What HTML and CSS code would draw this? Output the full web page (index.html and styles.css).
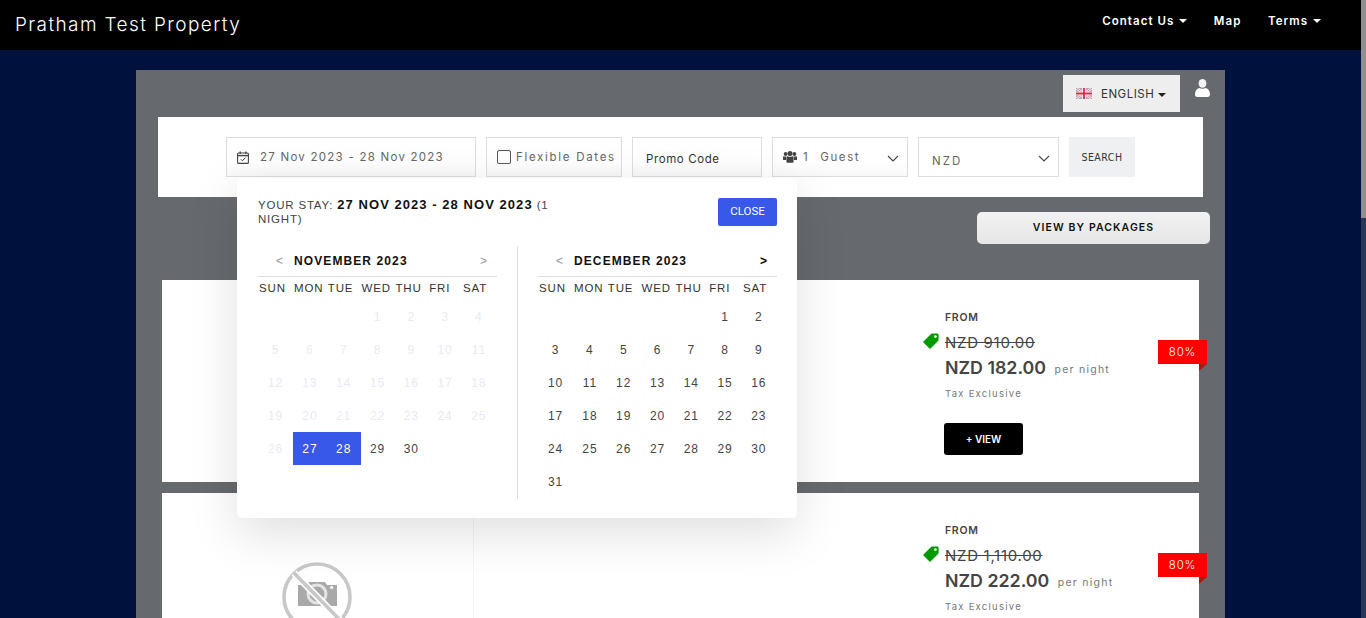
FILE: index.html
```html
<!DOCTYPE html>
<html>
<head>
<title>Pratham Test Property</title>
<link rel="stylesheet" href="styles.css">
</head>
<body>
<div class="page">
  <header class="topbar">
    <div class="brand">Pratham Test Property</div>
    <nav class="topnav">
      <a class="navlink caret-after">Contact Us</a>
      <a class="navlink">Map</a>
      <a class="navlink caret-after">Terms</a>
    </nav>
  </header>

  <main class="container">
    <div class="langrow">
      <div class="langbtn">
        <svg class="flag" viewBox="0 0 16 11" width="16" height="11">
          <rect width="16" height="11" fill="#a9a9c4"/>
          <path d="M0 0L16 11M16 0L0 11" stroke="#fff" stroke-width="2"/>
          <path d="M0 0L16 11M16 0L0 11" stroke="#d8455e" stroke-width=".7"/>
          <path d="M8 0V11M0 5.5H16" stroke="#fff" stroke-width="3.4"/>
          <path d="M8 0V11M0 5.5H16" stroke="#d62a44" stroke-width="1.8"/>
        </svg>
        <span>ENGLISH</span><span class="caret dark"></span>
      </div>
      <svg class="usericon" viewBox="0 0 15 18" width="15" height="18">
        <ellipse cx="7.5" cy="4.4" rx="3.9" ry="4.4" fill="#f2f2f2"/>
        <path d="M0 15.5C0 11.8 1.8 9.6 4.4 9C6 10 9 10 10.6 9C13.2 9.6 15 11.8 15 15.5C15 17 14 18 12.8 18H2.2C1 18 0 17 0 15.5Z" fill="#fff"/>
      </svg>
    </div>

    <section class="searchbar">
      <div class="field field-date">
        <svg class="calicon" viewBox="0 0 12 13" width="12" height="13">
          <rect x=".6" y="2" width="10.8" height="10.4" rx="1" fill="none" stroke="#444" stroke-width="1.1"/>
          <path d="M.6 4.6H11.4" stroke="#444" stroke-width="1.4"/>
          <path d="M3.2 .4V3M8.8 .4V3" stroke="#444" stroke-width="1.3"/>
          <path d="M3.8 8.2L5.4 9.8L8.4 6.6" fill="none" stroke="#444" stroke-width="1"/>
        </svg>
        <span>27 Nov 2023 - 28 Nov 2023</span>
      </div>
      <label class="field field-flex"><span class="check"></span><span>Flexible Dates</span></label>
      <div class="field field-promo">Promo Code</div>
      <div class="field field-guest">
        <svg class="usersicon" viewBox="0 0 14 12" width="14" height="12">
          <circle cx="2.6" cy="3" r="1.9" fill="#444"/>
          <circle cx="11.4" cy="3" r="1.9" fill="#444"/>
          <circle cx="7" cy="2.6" r="2.5" fill="#444"/>
          <path d="M0 5.6H3V9H0ZM11 5.6H14V9H11Z" fill="#444"/>
          <path d="M3.4 6.2C3.4 5.4 4 5 4.6 5.2C6 6 8 6 9.4 5.2C10 5 10.6 5.4 10.6 6.2V10.4C10.6 11.4 10 11.8 9.4 11.8H4.6C4 11.8 3.4 11.4 3.4 10.4Z" fill="#444"/>
        </svg>
        <span class="guestcount">1</span><span>Guest</span>
        <svg class="chev" viewBox="0 0 12 7" width="12" height="7"><path d="M1 1L6 6L11 1" fill="none" stroke="#444" stroke-width="1.1"/></svg>
      </div>
      <div class="field field-cur">
        <span>NZD</span>
        <svg class="chev" viewBox="0 0 12 7" width="12" height="7"><path d="M1 1L6 6L11 1" fill="none" stroke="#444" stroke-width="1.1"/></svg>
      </div>
      <button class="searchbtn">SEARCH</button>

      <div class="datepop">
        <div class="pophead">
          <div class="staytext">YOUR STAY: <b>27 NOV 2023 - 28 NOV 2023</b> (1 NIGHT)</div>
          <button class="closebtn">CLOSE</button>
        </div>
        <div class="months">
          <div class="month">
            <div class="monthhead">
              <span class="arrow">&lt;</span>
              <span class="monthname">NOVEMBER 2023</span>
              <span class="arrow arrow-next">&gt;</span>
            </div>
            <div class="daynames"><span>SUN</span><span>MON</span><span>TUE</span><span>WED</span><span>THU</span><span>FRI</span><span>SAT</span></div>
            <div class="dates">
              <span class="off from-4">1</span><span class="off">2</span><span class="off">3</span><span class="off">4</span>
              <span class="off">5</span><span class="off">6</span><span class="off">7</span><span class="off">8</span><span class="off">9</span><span class="off">10</span><span class="off">11</span>
              <span class="off">12</span><span class="off">13</span><span class="off">14</span><span class="off">15</span><span class="off">16</span><span class="off">17</span><span class="off">18</span>
              <span class="off">19</span><span class="off">20</span><span class="off">21</span><span class="off">22</span><span class="off">23</span><span class="off">24</span><span class="off">25</span>
              <span class="off">26</span><span class="sel">27</span><span class="sel">28</span><span>29</span><span>30</span>
            </div>
          </div>
          <div class="month month-right">
            <div class="monthhead">
              <span class="arrow">&lt;</span>
              <span class="monthname">DECEMBER 2023</span>
              <span class="arrow arrow-next active">&gt;</span>
            </div>
            <div class="daynames"><span>SUN</span><span>MON</span><span>TUE</span><span>WED</span><span>THU</span><span>FRI</span><span>SAT</span></div>
            <div class="dates">
              <span class="from-6">1</span><span>2</span>
              <span>3</span><span>4</span><span>5</span><span>6</span><span>7</span><span>8</span><span>9</span>
              <span>10</span><span>11</span><span>12</span><span>13</span><span>14</span><span>15</span><span>16</span>
              <span>17</span><span>18</span><span>19</span><span>20</span><span>21</span><span>22</span><span>23</span>
              <span>24</span><span>25</span><span>26</span><span>27</span><span>28</span><span>29</span><span>30</span>
              <span>31</span>
            </div>
          </div>
        </div>
      </div>
    </section>

    <div class="pkgrow"><button class="pkgbtn">VIEW BY PACKAGES</button></div>

    <article class="card">
      <div class="photo">
        <svg class="nophoto" viewBox="0 0 70 70" width="70" height="70">
          <circle cx="35" cy="35" r="33" fill="none" stroke="#c8c8c8" stroke-width="3.6"/>
          <path d="M16 23H25L27 20H43L45 23H55V44H16Z" fill="#a9a9a9"/>
          <circle cx="49.7" cy="25.5" r="1.6" fill="#fff"/>
          <circle cx="35" cy="32" r="9" fill="none" stroke="#e4e4e4" stroke-width="3"/>
          <path d="M12 11L58 58" stroke="#fff" stroke-width="7"/>
          <path d="M12 11L58 58" stroke="#c8c8c8" stroke-width="3.6"/>
        </svg>
      </div>
      <div class="middle"></div>
      <div class="rates">
        <div class="from">FROM</div>
        <div class="oldprice">
          <svg class="tag" viewBox="0 0 16 16" width="16" height="16"><path d="M0 9L8 1C8.5 .5 9 .4 10 .4H14C15 .4 15.6 1 15.6 2V6C15.6 7 15.5 7.5 15 8L7 16Z" fill="#009a00"/><circle cx="12.4" cy="3.6" r="1.4" fill="#fff"/></svg>
          <s>NZD 910.00</s>
        </div>
        <div class="price">NZD 182.00 <small>per night</small></div>
        <div class="tax">Tax Exclusive</div>
        <button class="viewbtn">+ VIEW</button>
      </div>
      <div class="ribbon">80%</div>
    </article>

    <article class="card">
      <div class="photo">
        <svg class="nophoto" viewBox="0 0 70 70" width="70" height="70">
          <circle cx="35" cy="35" r="33" fill="none" stroke="#c8c8c8" stroke-width="3.6"/>
          <path d="M16 23H25L27 20H43L45 23H55V44H16Z" fill="#a9a9a9"/>
          <circle cx="49.7" cy="25.5" r="1.6" fill="#fff"/>
          <circle cx="35" cy="32" r="9" fill="none" stroke="#e4e4e4" stroke-width="3"/>
          <path d="M12 11L58 58" stroke="#fff" stroke-width="7"/>
          <path d="M12 11L58 58" stroke="#c8c8c8" stroke-width="3.6"/>
        </svg>
      </div>
      <div class="middle"></div>
      <div class="rates">
        <div class="from">FROM</div>
        <div class="oldprice">
          <svg class="tag" viewBox="0 0 16 16" width="16" height="16"><path d="M0 9L8 1C8.5 .5 9 .4 10 .4H14C15 .4 15.6 1 15.6 2V6C15.6 7 15.5 7.5 15 8L7 16Z" fill="#009a00"/><circle cx="12.4" cy="3.6" r="1.4" fill="#fff"/></svg>
          <s>NZD 1,110.00</s>
        </div>
        <div class="price">NZD 222.00 <small>per night</small></div>
        <div class="tax">Tax Exclusive</div>
        <button class="viewbtn">+ VIEW</button>
      </div>
      <div class="ribbon">80%</div>
    </article>
  </main>
  <div class="scrollbar"><div class="scrollthumb"></div></div>
</div>
</body>
</html>
```

FILE: styles.css
```css
html, body {
  margin: 0;
  height: 100%;
  overflow: hidden;
}

body {
  font-family: Inter, "Liberation Sans", sans-serif;
  color: #444;
}

.page {
  height: 100vh;
  overflow: hidden;
  background-color: #00113d;
}

/* the window scrollbar, drawn because the page is clipped to one screen */
.scrollbar {
  position: fixed;
  top: 0;
  right: 0;
  bottom: 0;
  width: 5px;
  background-color: #2b3556;
}

.scrollthumb {
  height: 218px;
  background-color: #8f8f8f;
}

/* top bar */
.topbar {
  height: 50px;
  background-color: #000;
  display: flex;
  align-items: center;
  justify-content: space-between;
  padding: 0 45px 0 15px;
}

.brand {
  color: #fff;
  font-size: 19px;
  font-weight: 300;
  letter-spacing: 1.4px;
  margin-top: -2px;
}

.topnav {
  display: flex;
  gap: 26.5px;
  margin-top: -8px;
}

.navlink {
  color: #fff;
  font-size: 11.5px;
  font-weight: 600;
  letter-spacing: 1.05px;
}

.caret-after::after {
  content: "";
  display: inline-block;
  margin-left: 5px;
  vertical-align: 2px;
  border-top: 4px solid #fff;
  border-left: 4px solid transparent;
  border-right: 4px solid transparent;
}

/* main panel */
.container {
  box-sizing: border-box;
  width: 1089px;
  min-height: 1662px;
  margin: 20px 0 20px 136px;
  padding: 5px 0 0;
  background-color: #666a6e;
}

.langrow {
  display: flex;
  justify-content: flex-end;
  height: 42px;
  padding-right: 15px;
}

.langbtn {
  width: 117px;
  height: 37px;
  box-sizing: border-box;
  padding-left: 13px;
  margin-right: 15px;
  background-color: #eee;
  display: flex;
  align-items: center;
  font-size: 11.5px;
  letter-spacing: .5px;
  color: #333;
}

.flag {
  margin-right: 9px;
}

.caret {
  display: inline-block;
  margin-left: 4px;
  margin-top: 2px;
  border-top: 4px solid #fff;
  border-left: 4px solid transparent;
  border-right: 4px solid transparent;
}

.caret.dark {
  border-top-color: #222;
}

.usericon {
  margin-top: 4px;
}

/* search row */
.searchbar {
  position: relative;
  margin: 0 22px;
  height: 80px;
  background-color: #fff;
  display: flex;
  justify-content: center;
  align-items: center;
  gap: 10px;
}

.field {
  box-sizing: border-box;
  height: 40px;
  border: 1px solid #ddd;
  background-image: linear-gradient(#fff 60%, #f8f8f8);
  display: flex;
  align-items: center;
  font-size: 11.5px;
  letter-spacing: 1.25px;
  color: #666;
}

.field-date {
  width: 250px;
  padding-left: 10px;
}

.calicon {
  margin-right: 11px;
}

.field-flex {
  width: 136px;
  padding-left: 10px;
  letter-spacing: 1.7px;
}

.check {
  width: 12px;
  height: 12px;
  border: 1px solid #555;
  border-radius: 2px;
  margin-right: 5px;
}

.field-promo {
  width: 130px;
  padding: 4px 0 0 13px;
  color: #333;
  letter-spacing: .6px;
}

.field-guest {
  width: 136px;
  padding-left: 10px;
  position: relative;
  letter-spacing: 1.6px;
}

.guestcount {
  margin: 0 11px 0 6px;
}

.field-cur {
  width: 141px;
  padding: 7px 0 0 13px;
  background-image: none;
  position: relative;
  letter-spacing: 2.1px;
}

.chev {
  position: absolute;
  right: 8px;
  top: 17px;
}

.searchbtn {
  width: 66px;
  height: 40px;
  border: 0;
  padding: 0;
  background-color: #eff0f1;
  font-family: "DejaVu Sans", sans-serif;
  font-stretch: condensed;
  font-size: 10.5px;
  letter-spacing: .5px;
  color: #333;
}

/* date popup */
.datepop {
  position: absolute;
  left: 79px;
  top: 61px;
  z-index: 5;
  box-sizing: border-box;
  width: 560px;
  height: 340px;
  padding: 20px;
  padding-left: 21px;
  background-color: #fff;
  border-radius: 5px;
  box-shadow: 0 15px 50px rgba(0, 0, 0, .13);
  font-family: "Liberation Sans", Arial, sans-serif;
  color: #333;
}

.pophead {
  display: flex;
  justify-content: space-between;
  align-items: flex-start;
  height: 48px;
}

.staytext {
  width: 310px;
  font-size: 11.5px;
  line-height: 14px;
  letter-spacing: .8px;
  color: #444;
}

.staytext b {
  color: #111;
  font-size: 13px;
  letter-spacing: 1.05px;
}

.closebtn {
  width: 59px;
  height: 28px;
  border: 0;
  border-radius: 2px;
  background-color: #3858e9;
  color: #fff;
  font-family: Roboto, sans-serif;
  font-size: 11.5px;
  padding: 0 0 2px;
}

.months {
  display: flex;
}

.month {
  width: 239px;
  height: 253px;
  padding-right: 20px;
  border-right: 1px solid #ddd;
}

.month-right {
  width: 239px;
  padding: 0 0 0 20px;
  border-right: 0;
}

.monthhead {
  position: relative;
  height: 31px;
  box-sizing: border-box;
  border-bottom: 1px solid #ddd;
  padding-bottom: 1px;
  display: flex;
  align-items: center;
  font-size: 12px;
  letter-spacing: 1.1px;
}

.arrow {
  width: 36px;
  padding-left: 18px;
  box-sizing: border-box;
  color: #999;
}

.arrow-next {
  position: absolute;
  right: 9px;
  width: auto;
  padding: 0;
}

.arrow-next.active {
  color: #000;
  font-weight: bold;
}

.monthname {
  font-weight: bold;
  color: #111;
}

.daynames {
  display: grid;
  grid-template-columns: 35px repeat(6, 33.8px);
  height: 22px;
  margin-bottom: 1px;
  align-items: center;
  font-size: 11.5px;
  letter-spacing: .85px;
  color: #333;
}

.daynames span {
  padding-left: 1px;
}

.dates {
  display: grid;
  grid-template-columns: 35px repeat(6, 33.8px);
  grid-auto-rows: 33px;
  font-size: 12px;
  letter-spacing: .9px;
  color: #444;
}

.dates span {
  display: flex;
  align-items: center;
  justify-content: center;
}

.dates .off {
  color: #e8eaf5;
}

.dates .sel {
  background-color: #3858e9;
  color: #fff;
}

.from-4 {
  grid-column-start: 4;
}

.from-6 {
  grid-column-start: 6;
}

/* room cards */
.pkgrow {
  display: flex;
  justify-content: flex-end;
  padding: 15px 15px 36px 0;
}

.pkgbtn {
  width: 233px;
  height: 32px;
  border: 0;
  border-radius: 5px;
  background-image: linear-gradient(#f2f2f2, #e6e6e6);
  font-family: Inter, sans-serif;
  font-size: 10.5px;
  font-weight: 600;
  letter-spacing: 1.1px;
  color: #111;
  padding: 0 0 2px;
}

.card {
  position: relative;
  width: 1037px;
  height: 202px;
  margin: 0 0 11px 26px;
  background-color: #fff;
  display: flex;
}

.photo {
  box-sizing: border-box;
  width: 312px;
  border-right: 1px solid #f5f5f5;
  display: flex;
  align-items: center;
  justify-content: center;
  padding: 6px 2px 0 0;
}

.middle {
  width: 471px;
}

.rates {
  padding-top: 31px;
}

.from {
  font-size: 10.5px;
  font-weight: 600;
  letter-spacing: .7px;
  line-height: 13px;
}

.oldprice {
  position: relative;
  margin-top: 10px;
  font-size: 15px;
  letter-spacing: .7px;
  line-height: 18px;
  color: #444;
}

.tag {
  position: absolute;
  left: -22px;
  top: -1px;
}

.price {
  margin-top: 5px;
  font-size: 17.8px;
  font-weight: 600;
  line-height: 22px;
  white-space: nowrap;
}

.price small {
  margin-left: 4px;
  font-size: 10.5px;
  font-weight: 400;
  letter-spacing: 1.25px;
  color: #777;
  vertical-align: 1px;
}

.tax {
  margin-top: 6px;
  font-size: 9.5px;
  letter-spacing: 1.25px;
  color: #777;
  line-height: 13px;
}

.viewbtn {
  display: block;
  margin: 23px 0 0 -1px;
  width: 79px;
  height: 32px;
  border: 0;
  border-radius: 3px;
  background-color: #000;
  color: #fff;
  font-family: Inter, sans-serif;
  font-size: 10px;
  font-weight: 600;
  padding: 0;
}

.ribbon {
  position: absolute;
  left: 996px;
  top: 60px;
  width: 49px;
  height: 24px;
  background-color: #f00;
  color: #fff;
  font-size: 11.5px;
  font-weight: 300;
  letter-spacing: .8px;
  line-height: 24px;
  text-align: center;
}

.ribbon::after {
  content: "";
  position: absolute;
  right: 0;
  top: 24px;
  border-top: 7px solid #b3160c;
  border-right: 8px solid transparent;
}
```
